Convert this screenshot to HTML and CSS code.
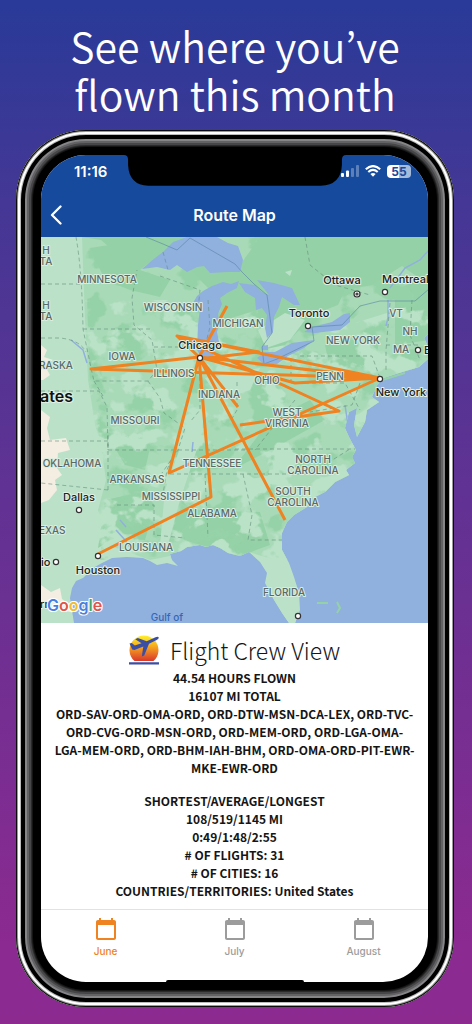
FILE: index.html
```html
<!DOCTYPE html>
<html lang="en">
<head>
<meta charset="utf-8">
<meta name="viewport" content="width=device-width, initial-scale=1">
<title>Flight Crew View – Route Map</title>
<link rel="stylesheet" href="styles.css">
</head>
<body>
<main class="promo">
  <h1 class="headline">See where you’ve<br>flown this month</h1>
  <div class="phone">
    <div class="screen">
      <header class="top">
        <svg class="notch" viewBox="0 0 220 32" aria-hidden="true"><path d="M0 0Q4 0 4 5V10Q5 30 24 30.500H195Q215 30 216 10V5Q216 0 220 0z" fill="#000"/></svg>
        <div class="status">
          <span class="time">11:16</span>
          <span class="signals">
            <svg width="18" height="12" viewBox="0 0 18 12" aria-hidden="true"><g fill="#fff"><rect x="0" y="8" width="3" height="4" rx="1"/><rect x="5" y="5.500" width="3" height="6.500" rx="1"/><g opacity=".3"><rect x="10" y="3" width="3" height="9" rx="1"/><rect x="15" y="0" width="3" height="12" rx="1"/></g></g></svg>
            <svg width="16" height="12" viewBox="0 0 16 12" aria-hidden="true"><g fill="none" stroke="#fff" stroke-width="2.100"><path d="M.8 4.300Q8-2.200 15.200 4.300"/><path d="M3.300 7Q8 2.800 12.700 7"/></g><path d="M5.400 9Q8 6.900 10.600 9L8 11.800z" fill="#fff"/></svg>
            <span class="battery">55</span>
          </span>
        </div>
        <div class="bar">
          <button class="back" type="button" aria-label="Back"><svg width="12" height="20" viewBox="0 0 12 20"><path d="M10.500 1.500 2 10l8.500 8.500" fill="none" stroke="#fff" stroke-width="2.300" stroke-linecap="round" stroke-linejoin="round"/></svg></button>
          <h2 class="title">Route Map</h2>
        </div>
      </header>

      <svg class="map" viewBox="41 237 387 386" role="img" aria-label="Map of routes flown">
        <defs>
          <path id="coast" d="M41 237H429V333L424 338 427 344 423 350 429 358 419 367 399 373 384 378 377 385 372 397 379 402 367 410 365 422 357 437 354 425 357 408 349 412 345 428 349 437 356 450 352 457 355 463 346 470 349 475 335 482 325 492 315 497 307 507 294 515 287 522 282 533 282 550 289 563 294 577 299 593 300 610 295 623H289L282 613 274 600 265 583 267 573 260 562 249 552 240 556 228 553 220 548 213 545 206 547 200 545 187 547 181 551 170 554 172 560 178 566 167 563 157 565 150 561 143 558 127 557 112 558 102 563 93 568 83 578 76 581 72 588 70 598 74 623H41z"/>
          <clipPath id="land"><use href="#coast"/></clipPath>
          <filter id="forest" x="0" y="0" width="100%" height="100%" color-interpolation-filters="sRGB">
            <feTurbulence type="fractalNoise" baseFrequency=".028 .036" numOctaves="4" seed="8"/>
            <feColorMatrix values="0 0 0 0 .59  0 0 0 0 .825  0 0 0 0 .66  12 0 0 0 -6.300"/>
            <feComposite in2="SourceGraphic" operator="in"/>
          </filter>
          <filter id="plain" x="0" y="0" width="100%" height="100%" color-interpolation-filters="sRGB">
            <feTurbulence type="fractalNoise" baseFrequency=".034 .04" numOctaves="4" seed="21"/>
            <feColorMatrix values="0 0 0 0 .73  0 0 0 0 .885  0 0 0 0 .78  12 0 0 0 -6.400"/>
            <feComposite in2="SourceGraphic" operator="in"/>
          </filter>
        </defs>
        <rect x="41" y="237" width="388" height="386" fill="#90b0de"/>
        <g clip-path="url(#land)">
          <rect x="41" y="237" width="388" height="386" fill="#bbe2c8"/>
          <path fill="#a9dab8" d="M82 237H429V550H300L275 560 225 545 150 560 108 545 98 510 106 480 100 440 95 425 88 380 85 320z"/>
          <path fill="#95d1a6" d="M110 440 138 433 150 448 145 470 125 465z M105 500 142 492 155 505 145 540 115 538 98 548z M160 520 190 510 260 512 270 545 240 556 190 542z M325 345 380 335 375 365 330 370z M270 420 310 400 325 420 280 445 232 470z M395 290 429 275V340L395 345z"/>
          <path filter="url(#forest)" d="M85 237H429V560H100L108 480 90 390z"/>
          <path filter="url(#plain)" d="M85 300 240 300 300 340 429 300V560H100L85 400z"/>
          <path fill="#95d1a6" d="M185 265H240L260 237H429V285L402 266 372 285 345 290 338 305 320 312 304 325 285 345 262 350 258 310 225 320 215 295z M90 248 140 240 180 238 140 270 170 280 160 297 130 290 105 280z M101 240 82 237H190L180 262 130 265z"/>
          <path fill="#bbe2c8" d="M258 330 285 313 305 320 290 340 266 348z M190 420 205 410 200 440 180 500 168 545 160 545 165 490z M205 378 260 368 250 390 220 400z M285 272 292 270 290 276z M268 560 284 560 298 595 297 623H288L268 590z"/>
          <path fill="#f3ede2" d="M41 345 47 350 44 357 53 360 45 366 50 375 43 380 41 380z M41 410 50 417 47 428 50 440 66 438 70 450 58 453 57 468 62 475 55 480 57 490 49 500 41 503z M41 585 51 592 60 588 62 599 72 606 74 613 41 605z"/>
          <g fill="#90b0de">
            <path d="M142 269 155 258 163 252 173 242 187 237H217L228 243 238 246 243 260 240 272 227 272 210 273 204 266 197 267 187 272 177 265 170 270 157 267z"/>
            <path d="M193 303 197 296 203 291 212 286 223 282 231 284 239 281 237 288 227 293 220 298 222 304 218 314 219 325 217 332 219 342 212 357 203 360 197 350 198 325 200 308 198 303z"/>
            <path d="M239 283 255 285 262 292 269 295 257 280 274 283 292 288 300 305 294 305 282 297 279 307 274 317 273 332 267 338 265 328 267 315 262 308 256 310 255 298 245 292z M257 358 265 352 275 352 292 343 314 340 304 348 288 356 277 364 265 365z M304 332 312 327 332 322 344 314 350 313 350 322 340 330 315 333z M262 346 268 345 268 350 262 350z"/>
          </g>
          <path fill="none" stroke="#90b0de" stroke-width="1.500" d="M388 300V318L386 326M429 250 420 260 405 268 390 288M71 340 83 350 87 363M193 442 192 452M116 530 125 540 130 547M120 520 126 527M345 405 348 425M282 503 290 505"/>
          <path fill="none" stroke="#638f7a" stroke-width=".8" stroke-dasharray="4 3" opacity=".75" d="M76 237Q82 270 83 329L91 368 94 381H148L157 370 152 340 134 325 132 298 137 270M83 329H150M41 284H83M41 338H60Q80 340 86 352M41 391H99L107 407 108 450 175 450 167 470 162 500M94 381 103 396M108 435V450M41 441H108V490M148 381 160 398 164 413 185 428 178 450 162 473M154 347H198M200 370V410L190 422M160 276 200 290 198 310M163 252 168 270M208 300 210 327 204 350M108 490 41 483M117 505H154V535L185 538M178 450H250M205 474 208 537M170 474H310L350 449M243 474 252 515 248 540H285M237 382V410L230 422M300 356H372L380 378M291 358V382M291 383H345L360 410M305 237 310 265 335 285 370 295M412 300 410 335 420 360M386 345H418M390 303 386 350 386 372M235 449H355M295 400 277 422 255 450M360 383 352 405 310 412"/>
          <path fill="none" stroke="#5684a5" stroke-width=".8" opacity=".75" d="M146 237 163 244 177 250 190 238 235 264 242 272 254 284 267 295 272 333 262 347 264 364 277 359 314 341 312 327 342 325 360 306 380 301H415L429 289"/>
        </g>
        <path fill="none" stroke="#95d1a6" stroke-width="2" d="M379 381 405 373M317 603H328M337 602 340 608 337 613"/>
        <path class="routes" d="M380 378 91 369 199 357 380 378 169 473 199 357 227 306M199 357 177 336 380 378M199 359 259 352 177 336 339 411 240 425M199 357 238 407M199 357 285 520M199 357 211 497 98 554M199 357 295 383 380 378"/>
        <g class="cities-dots">
          <circle cx="200" cy="358" r="2.600"/><circle cx="380" cy="379" r="2.600"/><circle cx="308" cy="326" r="2.600"/><circle cx="385" cy="292" r="2.600"/><circle cx="418" cy="350" r="2.600"/><circle cx="79" cy="510" r="2.600"/><circle cx="56" cy="562" r="2.600"/><circle cx="98" cy="556" r="2.600"/><circle cx="298" cy="616" r="2.600"/><circle cx="357" cy="294" r="3"/><circle cx="357" cy="294" r="1"/>
        </g>
        <g class="states">
          <text x="46" y="254">H</text><text x="46" y="265">TA</text><text x="46" y="309">H</text><text x="46" y="320">TA</text>
          <text x="107" y="283">MINNESOTA</text><text x="173" y="311">WISCONSIN</text><text x="238" y="327">MICHIGAN</text><text x="122" y="360">IOWA</text><text class="start" x="39" y="369">RASKA</text><text x="174" y="377">ILLINOIS</text><text x="219" y="398">INDIANA</text><text x="135" y="424">MISSOURI</text><text x="267" y="384">OHIO</text><text x="330" y="380">PENN</text><text x="353" y="344">NEW YORK</text><text x="396" y="317">VT</text><text x="410" y="335">NH</text><text x="401" y="353">MA</text><text x="287" y="416">WEST</text><text x="287" y="427">VIRGINIA</text><text x="72" y="467">OKLAHOMA</text><text x="137" y="483">ARKANSAS</text><text x="212" y="467">TENNESSEE</text><text x="171" y="500">MISSISSIPPI</text><text x="212" y="517">ALABAMA</text><text x="313" y="463">NORTH</text><text x="313" y="474">CAROLINA</text><text x="293" y="495">SOUTH</text><text x="293" y="506">CAROLINA</text><text class="start" x="39" y="534">EXAS</text><text x="146" y="551">LOUISIANA</text><text x="284" y="596">FLORIDA</text>
        </g>
        <g class="cities">
          <text x="200" y="349">Chicago</text><text x="342" y="284">Ottawa</text><text x="309" y="317">Toronto</text><text x="401" y="396">New York</text><text x="79" y="501">Dallas</text><text x="98" y="574">Houston</text>
          <text class="start" x="41" y="566">io</text><text class="start" x="40" y="608">rr</text><text class="start" x="382" y="283">Montreal</text><text class="start" x="424" y="354">B</text>
        </g>
        <text class="country" x="73" y="402">ates</text>
        <text class="sea" x="167" y="621">Gulf of</text>
        <text class="google" x="47" y="611"><tspan fill="#4a7fe0">G</tspan><tspan fill="#df5549">o</tspan><tspan fill="#f0bd35">o</tspan><tspan fill="#4a7fe0">g</tspan><tspan fill="#49a66a">l</tspan><tspan fill="#df5549">e</tspan></text>
      </svg>

      <section class="summary">
        <div class="brand">
          <svg width="30" height="30" viewBox="0 0 30 30" aria-hidden="true">
            <defs><linearGradient id="sun" x1="0" y1="0" x2="0" y2="1"><stop offset="0" stop-color="#fff12b"/><stop offset=".45" stop-color="#f6a51e"/><stop offset="1" stop-color="#d9382b"/></linearGradient></defs>
            <path d="M5.500 26A14.500 14.500 0 1 1 24.500 26z" fill="url(#sun)"/>
            <path d="M0 27.200H30V29.500H0z M.5 8.600 2.800 8 5.800 10.600 12.500 8.200 6.200 4.200 8.800 3 17.700 6.200 26.500 2.200Q29.500 1.300 29.800 2.800 29.800 4 27.200 5.200L20 8.700 15.200 20.500 12.800 21.500 14.300 11.500 5.500 15 3.200 14.500z" fill="#3a4fa4"/>
          </svg>
          <h3 class="brand-name">Flight Crew View</h3>
        </div>
        <p class="stats">44.54 HOURS FLOWN<br>16107 MI TOTAL<br>ORD-SAV-ORD-OMA-ORD, ORD-DTW-MSN-DCA-LEX, ORD-TVC-<br>ORD-CVG-ORD-MSN-ORD, ORD-MEM-ORD, ORD-LGA-OMA-<br>LGA-MEM-ORD, ORD-BHM-IAH-BHM, ORD-OMA-ORD-PIT-EWR-<br>MKE-EWR-ORD</p>
        <p class="stats">SHORTEST/AVERAGE/LONGEST<br>108/519/1145 MI<br>0:49/1:48/2:55<br># OF FLIGHTS: 31<br># OF CITIES: 16<br>COUNTRIES/TERRITORIES: United States</p>
      </section>

      <nav class="tabs" aria-label="Month">
        <button class="tab active" type="button"><svg class="cal" viewBox="0 0 24 24"><path d="M20 3h-1V1h-2v2H7V1H5v2H4c-1.100 0-2 .9-2 2v16c0 1.100.9 2 2 2h16c1.100 0 2-.9 2-2V5c0-1.100-.9-2-2-2zm0 18H4V8h16v13z"/></svg>June</button>
        <button class="tab" type="button"><svg class="cal" viewBox="0 0 24 24"><path d="M20 3h-1V1h-2v2H7V1H5v2H4c-1.100 0-2 .9-2 2v16c0 1.100.9 2 2 2h16c1.100 0 2-.9 2-2V5c0-1.100-.9-2-2-2zm0 18H4V8h16v13z"/></svg>July</button>
        <button class="tab" type="button"><svg class="cal" viewBox="0 0 24 24"><path d="M20 3h-1V1h-2v2H7V1H5v2H4c-1.100 0-2 .9-2 2v16c0 1.100.9 2 2 2h16c1.100 0 2-.9 2-2V5c0-1.100-.9-2-2-2zm0 18H4V8h16v13z"/></svg>August</button>
      </nav>
      <span class="home-indicator"></span>
    </div>
  </div>
</main>
</body>
</html>
```
FILE: styles.css
```css
* { box-sizing: border-box; }
body {
  margin: 0;
  min-height: 100vh;
  background: linear-gradient(#293a98, #453795 20%, #8b2a90 92%, #8c2a90);
  font-family: Inter, "Liberation Sans", sans-serif;
}
h1, h2, h3, p { margin: 0; font-weight: inherit; }
button { border: 0; background: none; padding: 0; font: inherit; color: inherit; }
svg { display: block; }

.promo { padding: 21px 18px 17px 16px; }
.headline {
  color: #fff;
  font-family: "Noto Sans CJK KR", "Open Sans", sans-serif;
  font-weight: 350;
  font-size: 41px;
  line-height: 48px;
  text-align: center;
}
.phone {
  margin-top: 13px;
  padding: 25px 26px 25px 25px;
  border-radius: 70px;
  background: #000;
  box-shadow:
    inset 0 0 0 1px #0c0c0c,
    inset 0 0 0 2px #999,
    inset 0 0 0 4px #fff,
    inset 0 0 0 5px #bbb,
    inset 0 0 0 9px #000,
    inset 0 0 0 11px #858588,
    inset 0 0 0 13px #626265,
    inset 0 0 0 15px #464648,
    inset 0 0 0 16px #2a2a2b,
    inset 0 0 0 17px #151515;
}
.screen {
  position: relative;
  overflow: hidden;
  border-radius: 45px;
  background: #fff;
}
.top {
  position: relative;
  color: #fff;
  background: #164a9c;
}
.notch {
  position: absolute;
  top: 0;
  left: 50%;
  width: 222px;
  transform: translateX(-50%);
}
.status {
  display: flex;
  justify-content: space-between;
  align-items: center;
  height: 38px;
  padding: 0 17px 6px 33px;
}
.time { font-size: 15px; font-weight: 600; }
.signals { display: flex; align-items: center; gap: 6px; }
.battery {
  width: 24px;
  height: 13px;
  border-radius: 4px;
  background: linear-gradient(90deg, #fff 50%, #a5bbdc 50%);
  color: #164a9c;
  font-size: 12px;
  font-weight: 700;
  line-height: 13px;
  text-align: center;
}
.bar {
  display: grid;
  grid-template-columns: 40px 1fr 40px;
  align-items: center;
  height: 44px;
}
.back { padding-left: 9px; }
.title { font-size: 16px; font-weight: 600; text-align: center; }

.map { width: 100%; height: auto; }
.map text { paint-order: stroke; stroke-linejoin: round; text-anchor: middle; }
.routes { fill: none; stroke: #ef8221; stroke-width: 3; stroke-linejoin: round; }
.cities-dots { fill: #fff; stroke: #333; stroke-width: 1.200; }
.states { font-size: 10px; font-weight: 500; fill: #5a6866; stroke: #d8eee0; stroke-width: 2; }
.cities { font-size: 11px; font-weight: 500; fill: #222; stroke: #e0f1e6; stroke-width: 2; }
.country { font-size: 16px; font-weight: 600; fill: #111; stroke: #e0f1e6; stroke-width: 2; }
.sea { font-size: 10px; font-weight: 500; fill: #3367b5; }
.google { font-size: 16px; font-weight: 600; stroke: #fff; stroke-width: 2; }
.map .start, .map .google { text-anchor: start; }
.map .country { text-anchor: end; }

.summary {
  display: flex;
  flex-direction: column;
  gap: 15px;
  padding: 10px 8px 9px;
  color: #151515;
  font-family: "Noto Sans CJK KR", "Noto Sans", sans-serif;
  text-align: center;
}
.brand { display: flex; justify-content: center; align-items: center; gap: 11px; height: 34px; margin-bottom: -13px; }
.brand-name { font-size: 23px; font-weight: 300; line-height: 34px; }
.stats { font-size: 12px; font-weight: 700; line-height: 18px; white-space: nowrap; }

.tabs {
  display: grid;
  grid-template-columns: repeat(3, 1fr);
  height: 73px;
  border-top: 1px solid #e2e2e2;
}
.tab {
  display: flex;
  flex-direction: column;
  align-items: center;
  gap: 4px;
  padding-top: 7px;
  color: #9c9c9c;
  font-size: 10px;
  font-weight: 500;
  line-height: 12px;
}
.tab.active { color: #ef8221; }
.cal { width: 24px; height: 24px; fill: currentColor; }
.home-indicator {
  position: absolute;
  bottom: 0;
  left: 50%;
  width: 138px;
  height: 2px;
  border-radius: 2px 2px 0 0;
  background: #000;
  transform: translateX(-50%);
}
```
